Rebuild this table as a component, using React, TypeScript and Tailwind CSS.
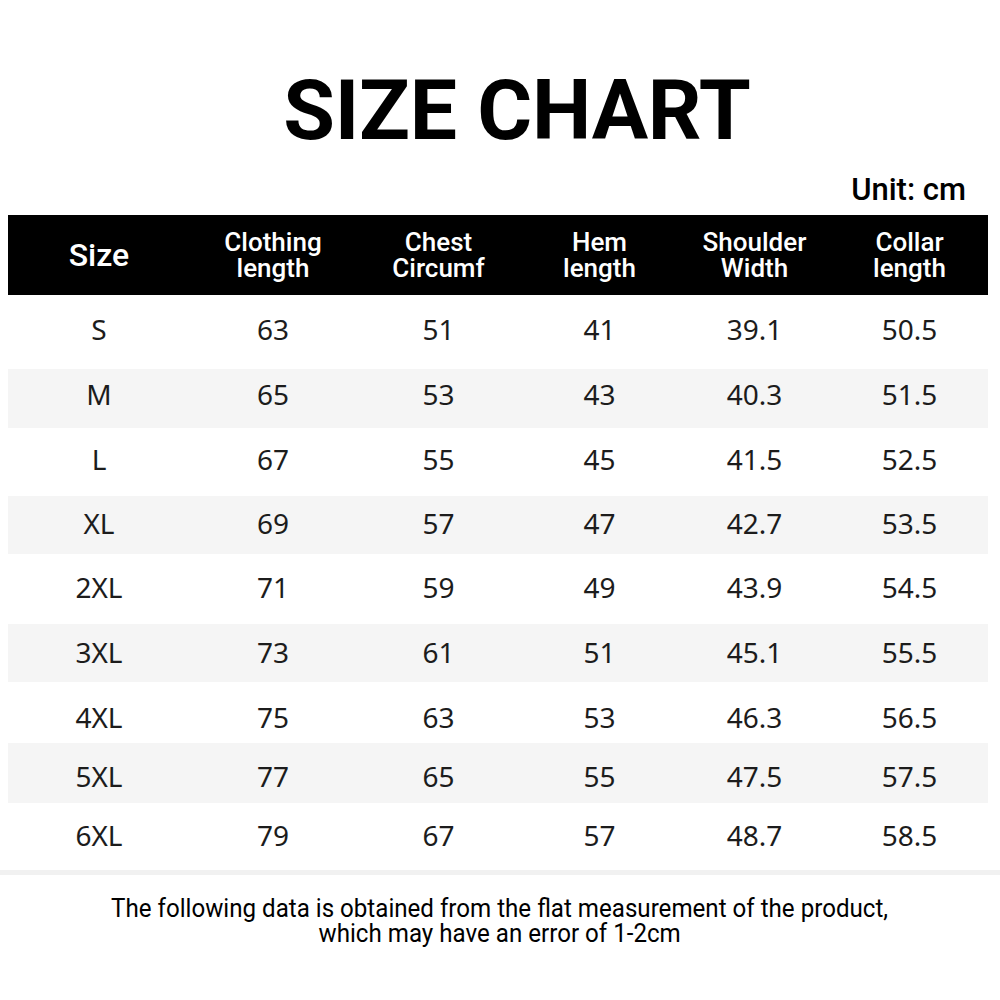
import React from "react";

const rows: { size: string; vals: string[]; h: string; band: boolean; pad: string }[] = [
  { size: "S", vals: ["63", "51", "41", "39.1", "50.5"], h: "h-[74px]", band: false, pad: "pb-[6px]" },
  { size: "M", vals: ["65", "53", "43", "40.3", "51.5"], h: "h-[59px]", band: true, pad: "pb-[10px]" },
  { size: "L", vals: ["67", "55", "45", "41.5", "52.5"], h: "h-[68px]", band: false, pad: "pb-[6px]" },
  { size: "XL", vals: ["69", "57", "47", "42.7", "53.5"], h: "h-[58px]", band: true, pad: "pb-[4px]" },
  { size: "2XL", vals: ["71", "59", "49", "43.9", "54.5"], h: "h-[70px]", band: false, pad: "pb-[4px]" },
  { size: "3XL", vals: ["73", "61", "51", "45.1", "55.5"], h: "h-[58px]", band: true, pad: "pb-[2px]" },
  { size: "4XL", vals: ["75", "63", "53", "46.3", "56.5"], h: "h-[61px]", band: false, pad: "pt-[8px]" },
  { size: "5XL", vals: ["77", "65", "55", "47.5", "57.5"], h: "h-[60px]", band: true, pad: "pt-[6px]" },
  { size: "6XL", vals: ["79", "67", "57", "48.7", "58.5"], h: "h-[67px]", band: false, pad: "pb-[4px]" },
];

const headers: string[][] = [
  ["Clothing", "length"],
  ["Chest", "Circumf"],
  ["Hem", "length"],
  ["Shoulder", "Width"],
  ["Collar", "length"],
];

const grid = "grid grid-cols-[182px_166px_165px_157px_153px_157px]";

export default function App() {
  return (
    <div className="w-[1000px] h-[1000px] bg-white flex flex-col overflow-hidden">
      <div className="pt-[69px] pl-[34px] flex justify-center">
        <h1 className="text-[84px] leading-none font-bold text-black font-['Roboto',sans-serif] tracking-[-0.3px]">
          SIZE CHART
        </h1>
      </div>
      <div className="mt-[21px] flex justify-end pr-[34px]">
        <span className="text-[31px] leading-none font-medium text-black font-['Roboto',sans-serif]">
          Unit: cm
        </span>
      </div>
      <div className={`${grid} mt-[10px] mx-[8px] w-[980px] h-[80px] bg-black text-white font-['Roboto',sans-serif] font-medium`}>
        <div className="flex items-center justify-center text-[32px] leading-none">Size</div>
        {headers.map((h) => (
          <div key={h[0]} className="flex flex-col items-center justify-center text-[26px] leading-[26px]">
            <span>{h[0]}</span>
            <span>{h[1]}</span>
          </div>
        ))}
      </div>
      <div className="mx-[8px] w-[980px] font-['Noto_Sans',sans-serif] text-[28px] leading-none text-[#1c1c1c]">
        {rows.map((r) => (
          <div key={r.size} className={`${grid} ${r.h} ${r.band ? "bg-[#f5f5f5]" : "bg-white"}`}>
            <div className={`flex items-center justify-center ${r.pad}`}>{r.size}</div>
            {r.vals.map((v, i) => (
              <div key={i} className={`flex items-center justify-center ${r.pad}`}>{v}</div>
            ))}
          </div>
        ))}
      </div>
      <div className="h-[5px] bg-[#f1f1f1]" />
      <div className="mt-[21px] flex flex-col items-center font-['Roboto',sans-serif] text-[25px] leading-[25px] text-black">
        <span className="inline-block scale-x-[0.965] whitespace-nowrap">The following data is obtained from the flat measurement of the product,</span>
        <span className="inline-block scale-x-[0.965] whitespace-nowrap">which may have an error of 1-2cm</span>
      </div>
    </div>
  );
}
